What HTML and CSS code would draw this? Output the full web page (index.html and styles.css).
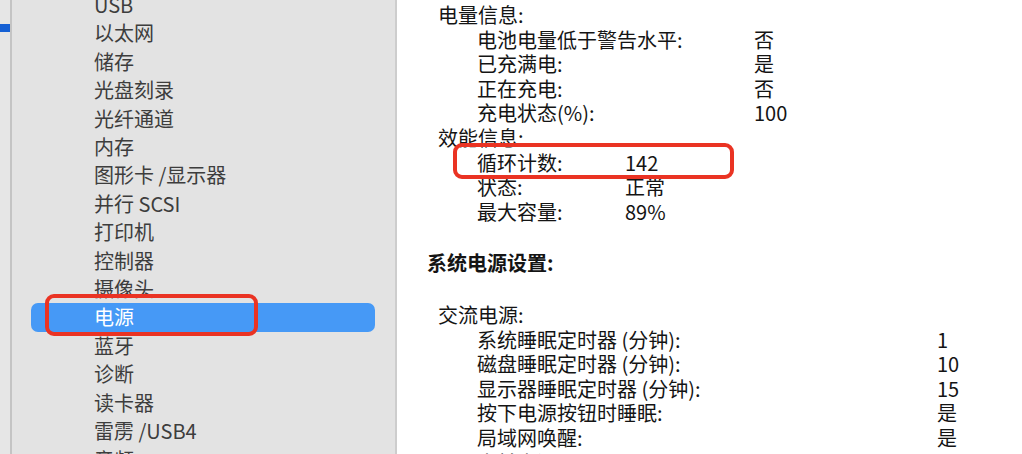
FILE: index.html
```html
<!DOCTYPE html>
<html lang="zh-CN">
<head>
    <meta charset="UTF-8">
    <meta name="viewport" content="width=device-width, initial-scale=1.0">
    <title>系统信息 - 电源</title>
    <link rel="stylesheet" href="styles.css">
</head>
<body>

    <div class="window">
        <!-- Outer strip of the window behind -->
        <div class="edge">
            <div class="edge-mark"></div>
        </div>

        <!-- Sidebar: hardware categories -->
        <nav class="sidebar">
            <ul class="menu">
                <li>USB</li>
                <li>以太网</li>
                <li>储存</li>
                <li>光盘刻录</li>
                <li>光纤通道</li>
                <li>内存</li>
                <li>图形卡 /显示器</li>
                <li>并行 SCSI</li>
                <li>打印机</li>
                <li>控制器</li>
                <li>摄像头</li>
                <li class="active">电源<span class="mark mark-menu"></span></li>
                <li>蓝牙</li>
                <li>诊断</li>
                <li>读卡器</li>
                <li>雷雳 /USB4</li>
                <li>音频</li>
            </ul>
        </nav>

        <!-- Detail pane -->
        <main class="detail">
            <div class="group">
                <p class="group-title">电量信息:</p>
                <div class="rows rows-wide">
                    <span>电池电量低于警告水平:</span><span>否</span>
                    <span>已充满电:</span><span>是</span>
                    <span>正在充电:</span><span>否</span>
                    <span>充电状态(%):</span><span>100</span>
                </div>
            </div>

            <div class="group">
                <p class="group-title">效能信息:</p>
                <div class="rows rows-short">
                    <span class="marked">循环计数:<span class="mark mark-row"></span></span><span>142</span>
                    <span>状态:</span><span>正常</span>
                    <span>最大容量:</span><span>89%</span>
                </div>
            </div>

            <h2 class="section">系统电源设置:</h2>

            <div class="group">
                <p class="group-title">交流电源:</p>
                <div class="rows rows-long">
                    <span>系统睡眠定时器 (分钟):</span><span>1</span>
                    <span>磁盘睡眠定时器 (分钟):</span><span>10</span>
                    <span>显示器睡眠定时器 (分钟):</span><span>15</span>
                    <span>按下电源按钮时睡眠:</span><span>是</span>
                    <span>局域网唤醒:</span><span>是</span>
                    <span>当前电源:</span><span>是</span>
                </div>
            </div>
        </main>
    </div>

</body>
</html>
```

FILE: styles.css
```css
body {
    margin: 0;
    padding: 0;
    font-family: "Noto Sans CJK SC", "Noto Sans", sans-serif;
    background-color: #ffffff;
    overflow: hidden;
}

.window {
    display: flex;
    height: 454px;
    overflow: hidden;
}

/* Left strip */
.edge {
    width: 10px;
    flex-shrink: 0;
    background-color: #e6e6e6;
    border-right: 2px solid #c4c4c4;
    padding-top: 24px;
}

.edge-mark {
    height: 8px;
    background-color: #1560d4;
}

/* Sidebar */
.sidebar {
    width: 383px;
    flex-shrink: 0;
    background-color: #e3e3e3;
    border-right: 2px solid #cdcdcd;
}

.menu {
    list-style: none;
    margin: -9px 0 0 0;
    padding: 0;
    font-size: 20px;
    line-height: 28.4px;
    color: #3d3d3d;
}

.menu li {
    position: relative;
    margin: 0 20px 0 19px;
    padding-left: 63px;
    border-radius: 7px;
    white-space: nowrap;
}

.menu li.active {
    background-color: #4699f6;
    color: #ffffff;
}

/* Red highlight boxes */
.mark {
    position: absolute;
    border: 4px solid #ea3323;
    border-radius: 9px;
    box-sizing: border-box;
    pointer-events: none;
}

.mark-menu {
    left: 14px;
    top: -9px;
    width: 213px;
    height: 42px;
}

.marked {
    position: relative;
}

.mark-row {
    left: -24px;
    top: -8px;
    width: 281px;
    height: 36px;
}

/* Detail pane */
.detail {
    flex: 1;
    padding: 3px 0 0 30px;
    font-size: 20px;
    line-height: 24.6px;
    color: #141414;
}

.group-title {
    margin: 0 0 0 11px;
}

.rows {
    display: grid;
    margin-left: 50px;
    white-space: nowrap;
}

.rows-wide {
    grid-template-columns: 277px auto;
}

.rows-short {
    grid-template-columns: 148px auto;
}

.rows-long {
    grid-template-columns: 460px auto;
}

.section {
    margin: 27px 0 27px 0;
    font-size: 20px;
    line-height: 24.6px;
    font-weight: bold;
}
```
